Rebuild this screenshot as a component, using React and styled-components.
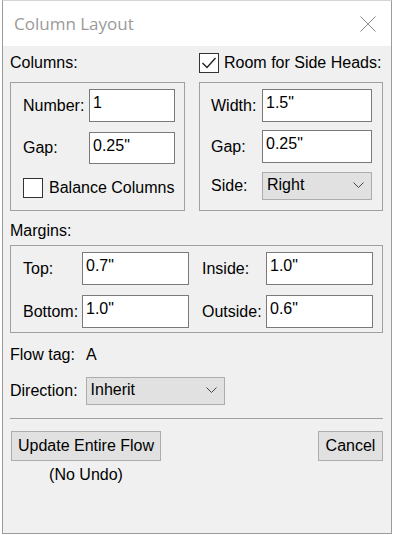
import React from "react";
import styled, { createGlobalStyle } from "styled-components";

const Global = createGlobalStyle`
  html, body { margin: 0; padding: 0; background: #ffffff; }
  body { font-family: "Liberation Sans", Arial, sans-serif; }
  * { box-sizing: border-box; }
`;

const Window = styled.div`
  width: 390px;
  height: 534px;
  margin-left: 2px;
  border: 1px solid #9c9c9c;
  border-top-color: #d4d4d4;
  display: flex;
  flex-direction: column;
  background: #f0f0f0;
  color: #000;
  font-size: 16px;
`;

const TitleBar = styled.div`
  height: 45px;
  background: #ffffff;
  display: flex;
  align-items: center;
  justify-content: space-between;
  padding: 0 15px 0 11px;
  flex-shrink: 0;
`;

const Title = styled.div`
  font-family: "Open Sans", "Noto Sans", sans-serif;
  font-size: 17px;
  color: #9a9a9a;
  margin-top: -1px;
`;

const Body = styled.div`
  flex: 1;
  padding: 0 8px 0 7px;
  display: flex;
  flex-direction: column;
`;

const TopRow = styled.div`
  display: grid;
  grid-template-columns: 175px 184px;
  column-gap: 14px;
  margin-top: 6px;
`;

const Column = styled.div`
  display: flex;
  flex-direction: column;
`;

const Header = styled.div`
  height: 21px;
  display: flex;
  align-items: center;
  margin-bottom: 9px;
  white-space: nowrap;
`;

const CheckLabel = styled.label`
  display: flex;
  align-items: center;
  gap: ${(p) => p.$gap || 5}px;
  white-space: nowrap;
`;

const Box = styled.div`
  width: 20px;
  height: 20px;
  border: 1px solid #333333;
  background: #ffffff;
  display: flex;
  align-items: center;
  justify-content: center;
  flex-shrink: 0;
`;

const Group = styled.div`
  border: 1px solid #a0a0a0;
  height: ${(p) => p.$h}px;
  padding: 6px ${(p) => p.$pr}px 0 ${(p) => p.$pl}px;
  display: flex;
  flex-direction: column;
`;

const FieldRow = styled.div`
  display: flex;
  align-items: center;
  justify-content: space-between;
  margin-bottom: ${(p) => p.$mb || 0}px;
`;

const Input = styled.div`
  width: ${(p) => p.$w}px;
  height: ${(p) => p.$h || 32}px;
  border: 1px solid #7a7a7a;
  background: #ffffff;
  padding: 4px 0 0 3px;
  line-height: 18px;
  flex-shrink: 0;
`;

const Select = styled.div`
  width: ${(p) => p.$w}px;
  height: ${(p) => p.$h || 28}px;
  border: 1px solid #adadad;
  background: #e1e1e1;
  display: flex;
  align-items: center;
  justify-content: space-between;
  padding: 0 7px 2px 4px;
  flex-shrink: 0;
`;

const MarginsLabel = styled.div`
  margin-top: 10px;
  height: 20px;
  display: flex;
  align-items: center;
  margin-bottom: 4px;
`;

const MarginsGrid = styled.div`
  display: grid;
  grid-template-columns: 59px 107px 77px 107px;
  row-gap: 10px;
  align-items: center;
`;

const GridLabel = styled.span`
  padding-left: ${(p) => p.$pl || 0}px;
  white-space: nowrap;
`;

const FlowRow = styled.div`
  display: flex;
  align-items: center;
  height: 20px;
  margin-top: 12px;
`;

const FlowValue = styled.span`
  margin-left: 11px;
`;

const DirRow = styled.div`
  display: flex;
  align-items: center;
  gap: 8px;
  margin-top: 12px;
`;

const Separator = styled.div`
  height: 1px;
  background: #a0a0a0;
  margin-top: 13px;
`;

const ButtonRow = styled.div`
  display: flex;
  justify-content: space-between;
  align-items: flex-start;
  margin-top: 12px;
  padding-left: 1px;
`;

const ButtonCol = styled.div`
  display: flex;
  flex-direction: column;
  align-items: center;
`;

const Button = styled.div`
  width: ${(p) => p.$w}px;
  height: 30px;
  border: 1px solid #adadad;
  background: #e1e1e1;
  display: flex;
  align-items: center;
  justify-content: center;
  padding-bottom: 1px;
`;

const Note = styled.div`
  margin-top: 5px;
`;

const Chevron = () => (
  <svg width="11" height="6" viewBox="0 0 11 6">
    <path d="M0.5 0.5 L5.5 5.5 L10.5 0.5" fill="none" stroke="#444" strokeWidth="1" />
  </svg>
);

const Close = () => (
  <svg width="16" height="16" viewBox="0 0 16 16">
    <path d="M0.5 0.5 L15.5 15.5 M15.5 0.5 L0.5 15.5" stroke="#8a8a8a" strokeWidth="1" fill="none" />
  </svg>
);

const Check = () => (
  <svg width="16" height="14" viewBox="0 0 16 14">
    <path d="M1.5 7 L6 11.5 L14.5 2" fill="none" stroke="#222" strokeWidth="1.4" />
  </svg>
);

export default function App() {
  return (
    <>
      <Global />
      <Window>
        <TitleBar>
          <Title>Column Layout</Title>
          <Close />
        </TitleBar>
        <Body>
          <TopRow>
            <Column>
              <Header>Columns:</Header>
              <Group $h={129} $pl={12} $pr={9}>
                <FieldRow $mb={10}>
                  <span>Number:</span>
                  <Input $w={86} $h={33}>1</Input>
                </FieldRow>
                <FieldRow $mb={14}>
                  <span>Gap:</span>
                  <Input $w={86}>0.25"</Input>
                </FieldRow>
                <CheckLabel $gap={6}>
                  <Box />
                  Balance Columns
                </CheckLabel>
              </Group>
            </Column>
            <Column>
              <Header>
                <CheckLabel $gap={5}>
                  <Box>
                    <Check />
                  </Box>
                  Room for Side Heads:
                </CheckLabel>
              </Header>
              <Group $h={129} $pl={11} $pr={10}>
                <FieldRow $mb={8}>
                  <span>Width:</span>
                  <Input $w={110} $h={33}>1.5"</Input>
                </FieldRow>
                <FieldRow $mb={9}>
                  <span>Gap:</span>
                  <Input $w={110} $h={33}>0.25"</Input>
                </FieldRow>
                <FieldRow>
                  <span>Side:</span>
                  <Select $w={110} $h={28}>
                    <span>Right</span>
                    <Chevron />
                  </Select>
                </FieldRow>
              </Group>
            </Column>
          </TopRow>
          <MarginsLabel>Margins:</MarginsLabel>
          <Group $h={88} $pl={12} $pr={9}>
            <MarginsGrid>
              <GridLabel>Top:</GridLabel>
              <Input $w={107} $h={33}>0.7"</Input>
              <GridLabel $pl={13}>Inside:</GridLabel>
              <Input $w={107} $h={33}>1.0"</Input>
              <GridLabel>Bottom:</GridLabel>
              <Input $w={107} $h={33}>1.0"</Input>
              <GridLabel $pl={13}>Outside:</GridLabel>
              <Input $w={107} $h={33}>0.6"</Input>
            </MarginsGrid>
          </Group>
          <FlowRow>
            Flow tag:<FlowValue>A</FlowValue>
          </FlowRow>
          <DirRow>
            <span>Direction:</span>
            <Select $w={139} $h={28}>
              <span>Inherit</span>
              <Chevron />
            </Select>
          </DirRow>
          <Separator />
          <ButtonRow>
            <ButtonCol>
              <Button $w={150}>Update Entire Flow</Button>
              <Note>(No Undo)</Note>
            </ButtonCol>
            <Button $w={65}>Cancel</Button>
          </ButtonRow>
        </Body>
      </Window>
    </>
  );
}
